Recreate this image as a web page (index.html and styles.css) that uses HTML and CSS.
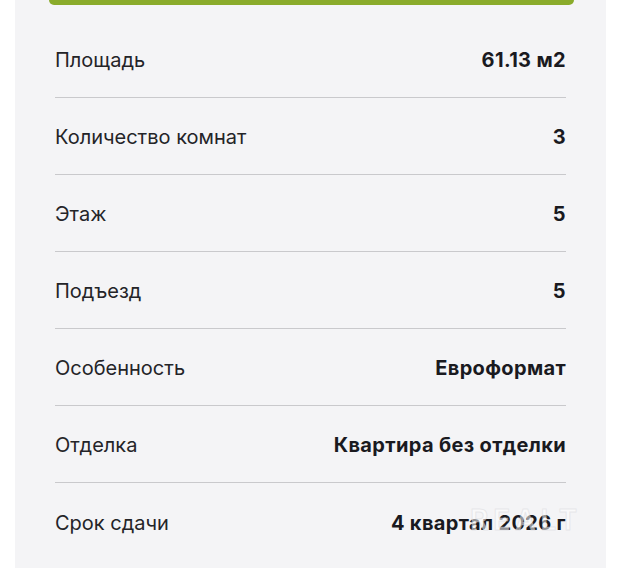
FILE: index.html
```html
<!DOCTYPE html>
<html lang="ru">
<head>
<meta charset="utf-8">
<link rel="stylesheet" href="styles.css">
</head>
<body>
<div class="panel">
  <div class="photo"></div>
  <dl class="props">
    <div class="row"><dt>Площадь</dt><dd>61.13 м2</dd></div>
    <div class="row"><dt>Количество комнат</dt><dd>3</dd></div>
    <div class="row"><dt>Этаж</dt><dd>5</dd></div>
    <div class="row"><dt>Подъезд</dt><dd>5</dd></div>
    <div class="row"><dt>Особенность</dt><dd>Евроформат</dd></div>
    <div class="row"><dt>Отделка</dt><dd>Квартира без отделки</dd></div>
    <div class="row"><dt>Срок сдачи</dt><dd>4 квартал 2026 г</dd></div>
  </dl>
  <div class="watermark">REALT</div>
</div>
</body>
</html>
```
FILE: styles.css
```css
html, body {
  margin: 0;
  padding: 0;
  background: #ffffff;
}
body {
  font-family: Inter, "Noto Sans", sans-serif;
  color: #1f1f24;
}
.panel {
  position: relative;
  margin-left: 15px;
  width: 591px;
  height: 568px;
  background: #f4f4f6;
  overflow: hidden;
}
.photo {
  margin: 0 32px 0 34px;
  height: 5px;
  background: #8aab2b;
  border-radius: 0 0 9px 9px;
}
.props {
  margin: 0;
  padding: 16px 40px 0 40px;
}
.row {
  box-sizing: border-box;
  display: flex;
  justify-content: space-between;
  align-items: center;
  height: 77px;
  padding-top: 2px;
  border-bottom: 1px solid #c9c9cc;
}
.row:last-child {
  border-bottom: none;
}
dt {
  font-size: 20px;
  font-weight: 400;
  color: #242428;
}
dd {
  margin: 0;
  font-size: 20px;
  font-weight: 700;
  letter-spacing: 0.35px;
  color: #1a1a1f;
}
.watermark {
  position: absolute;
  left: 455px;
  top: 503px;
  font-size: 28px;
  font-weight: 600;
  letter-spacing: 5px;
  color: rgba(255, 255, 255, 0.55);
  -webkit-text-stroke: 1px rgba(200, 200, 205, 0.35);
  pointer-events: none;
}
```
